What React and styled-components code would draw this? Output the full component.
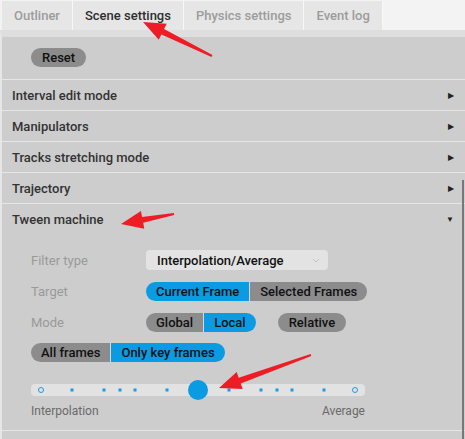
import React from "react";
import styled, { createGlobalStyle } from "styled-components";

const GlobalStyle = createGlobalStyle`
  html, body {
    margin: 0;
    padding: 0;
    background: #f3f3f3;
    font-family: Roboto, "Liberation Sans", sans-serif;
  }
`;

// positions of the ticks on the slider, 0..1
const ticks = [0, 0.1, 0.2, 0.25, 0.3, 0.4, 0.5, 0.6, 0.7, 0.75, 0.8, 0.9, 1];
const sections = ["Interval edit mode", "Manipulators", "Tracks stretching mode", "Trajectory"];

function Arrow({ x1, y1, x2, y2 }) {
  // thin tail widening to a sharp head, tip at (x2, y2)
  const dx = x2 - x1;
  const dy = y2 - y1;
  const len = Math.sqrt(dx * dx + dy * dy);
  const ux = dx / len;
  const uy = dy / len;
  const nx = -uy;
  const ny = ux;
  const headLen = 22;
  const bx = x2 - ux * headLen;
  const by = y2 - uy * headLen;
  const pts = [
    [x1 + nx * 1, y1 + ny * 1],
    [bx + nx * 3, by + ny * 3],
    [bx + nx * 9, by + ny * 9],
    [x2, y2],
    [bx - nx * 9, by - ny * 9],
    [bx - nx * 3, by - ny * 3],
    [x1 - nx * 1, y1 - ny * 1],
  ];
  return <polygon points={pts.map((p) => p.join(",")).join(" ")} fill="#ee1c25" />;
}

export default function App() {
  return (
    <Page>
      <GlobalStyle />
      <TabBar>
        <Tab>Outliner</Tab>
        <Tab active>Scene settings</Tab>
        <Tab>Physics settings</Tab>
        <Tab>Event log</Tab>
      </TabBar>
      <Panel>
        <ResetRow>
          <PillButton>Reset</PillButton>
        </ResetRow>
        {sections.map((s) => (
          <SectionHeader key={s}>
            {s}
            <Caret>▶</Caret>
          </SectionHeader>
        ))}
        <SectionHeader>
          Tween machine
          <Caret>▼</Caret>
        </SectionHeader>
        <TweenBody>
          <FieldGrid>
            <FieldLabel>Filter type</FieldLabel>
            <Select>
              Interpolation/Average
              <svg width="8" height="5" viewBox="0 0 8 5">
                <path d="M1 1 L4 4 L7 1" stroke="#c4c4c4" strokeWidth="1" fill="none" />
              </svg>
            </Select>
            <FieldLabel>Target</FieldLabel>
            <Controls>
              <Segmented>
                <Segment active>Current Frame</Segment>
                <Segment>Selected Frames</Segment>
              </Segmented>
            </Controls>
            <FieldLabel>Mode</FieldLabel>
            <Controls gap={22}>
              <Segmented>
                <Segment>Global</Segment>
                <Segment active>Local</Segment>
              </Segmented>
              <PillButton>Relative</PillButton>
            </Controls>
          </FieldGrid>
          <Segmented>
            <Segment>All frames</Segment>
            <Segment active>Only key frames</Segment>
          </Segmented>
          <Slider>
            <Track>
              {ticks.map((t, i) => (
                <Tick
                  key={i}
                  end={t === 0 || t === 1}
                  style={{ left: `calc(10px + ${t} * (100% - 20px))` }}
                />
              ))}
              <Thumb style={{ left: `calc(10px + 0.5 * (100% - 20px))` }} />
            </Track>
            <SliderLabels>
              <span>Interpolation</span>
              <span>Average</span>
            </SliderLabels>
          </Slider>
        </TweenBody>
        <SectionHeader />
        <ScrollThumb />
      </Panel>
      <Overlay width="465" height="439" viewBox="0 0 465 439">
        <Arrow x1={212} y1={56} x2={143} y2={22} />
        <Arrow x1={174} y1={214} x2={121} y2={224} />
        <Arrow x1={311} y1={355} x2={219} y2={388} />
      </Overlay>
    </Page>
  );
}

const Page = styled.div`
  position: relative;
  width: 465px;
  height: 439px;
  overflow: hidden;
`;

const TabBar = styled.div`
  display: flex;
  height: 29px;
  padding: 1px 0 0 2px;
`;

const Tab = styled.div`
  display: flex;
  align-items: center;
  padding: 0 12px;
  background: #e6e6e6;
  border-right: 1px solid #f7f7f7;
  font-size: 13px;
  font-weight: 500;
  color: ${(p) => (p.active ? "#2e2e2e" : "#9c9c9c")};
`;

const Panel = styled.div`
  position: relative;
  height: 409px;
  background: #cdcdcd;
  border-top: 7px solid #dedede;
  border-left: 2px solid #e6e6e6;
  box-sizing: border-box;
`;

const ResetRow = styled.div`
  height: 42px;
  display: flex;
  align-items: center;
  padding: 0 0 2px 29px;
  box-sizing: border-box;
`;

const PillButton = styled.div`
  display: inline-flex;
  align-items: center;
  height: 19px;
  padding: 0 11px;
  border-radius: 10px;
  background: #8c8c8c;
  color: #111;
  font-size: 13px;
  font-weight: 500;
`;

const SectionHeader = styled.div`
  display: flex;
  align-items: center;
  justify-content: space-between;
  height: 30px;
  padding: 0 10px;
  border-top: 1px solid #e6e6e6;
  font-size: 13px;
  font-weight: 500;
  color: #333;
`;

const Caret = styled.span`
  font-size: 8px;
  color: #222;
  margin-right: 1px;
`;

const TweenBody = styled.div`
  display: flex;
  flex-direction: column;
  align-items: flex-start;
  padding: 16px 0 0 29px;
  height: 196px;
  box-sizing: border-box;
`;

const FieldGrid = styled.div`
  display: grid;
  grid-template-columns: 115px auto;
  grid-auto-rows: 20px;
  row-gap: 11px;
  align-items: center;
  margin-bottom: 11px;
`;

const FieldLabel = styled.div`
  font-size: 13px;
  color: #9a9a9a;
`;

const Controls = styled.div`
  display: flex;
  align-items: center;
  gap: ${(p) => p.gap || 0}px;
`;

const Select = styled.div`
  display: flex;
  align-items: center;
  justify-content: space-between;
  width: 182px;
  height: 20px;
  padding: 0 8px 0 11px;
  box-sizing: border-box;
  border-radius: 4px;
  background: #e3e3e3;
  font-size: 13px;
  font-weight: 500;
  color: #111;
`;

const Segmented = styled.div`
  display: flex;
  height: 19px;
  border-radius: 10px;
  overflow: hidden;
`;

const Segment = styled.div`
  display: flex;
  align-items: center;
  padding: 0 10px;
  background: ${(p) => (p.active ? "#0a9be3" : "#8c8c8c")};
  font-size: 13px;
  font-weight: 500;
  color: #111;
  & + & {
    border-left: 1px solid #d8d8d8;
  }
`;

const Slider = styled.div`
  margin-top: 22px;
  width: 334px;
`;

const Track = styled.div`
  position: relative;
  height: 12px;
  border-radius: 4px;
  background: #e2e2e2;
`;

const Tick = styled.div`
  position: absolute;
  top: 50%;
  width: ${(p) => (p.end ? "4px" : "3px")};
  height: ${(p) => (p.end ? "4px" : "3px")};
  transform: translate(-50%, -50%);
  border-radius: ${(p) => (p.end ? "50%" : "0")};
  background: ${(p) => (p.end ? "transparent" : "#1a9be0")};
  border: ${(p) => (p.end ? "1px solid #1a9be0" : "none")};
`;

const Thumb = styled.div`
  position: absolute;
  top: 50%;
  width: 20px;
  height: 20px;
  transform: translate(-50%, -50%);
  border-radius: 50%;
  background: #0a9be3;
`;

const SliderLabels = styled.div`
  display: flex;
  justify-content: space-between;
  margin-top: 8px;
  font-size: 12px;
  color: #6a6a6a;
`;

const ScrollThumb = styled.div`
  position: absolute;
  right: 1px;
  top: 143px;
  bottom: 0;
  width: 2px;
  background: #777;
`;

const Overlay = styled.svg`
  position: absolute;
  left: 0;
  top: 0;
  pointer-events: none;
`;
